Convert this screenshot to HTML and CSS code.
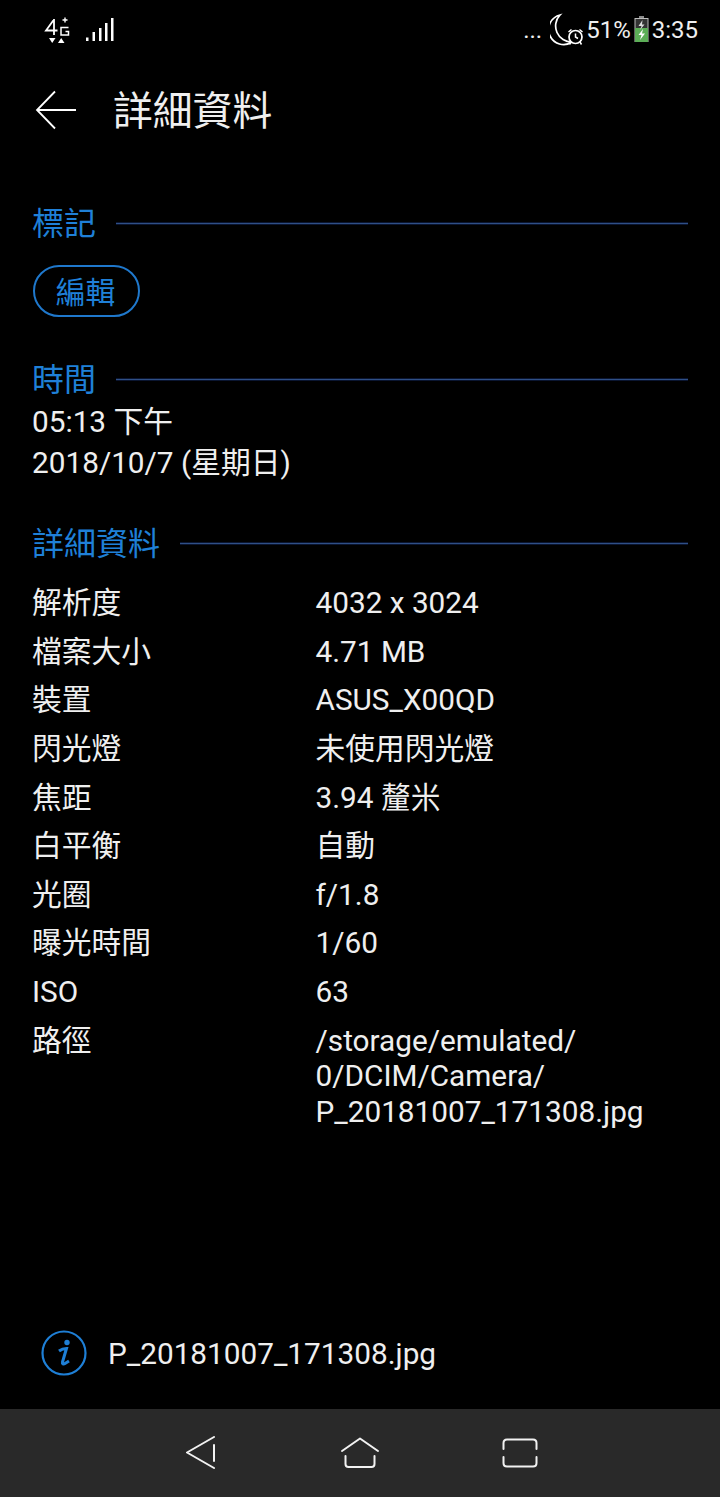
FILE: index.html
```html
<!DOCTYPE html>
<html lang="zh-Hant">
<head>
  <meta charset="UTF-8">
  <meta name="viewport" content="width=device-width, initial-scale=1.0">
  <title>詳細資料</title>
  <link rel="stylesheet" href="styles.css">
</head>
<body>
  <div class="phone">
    <!-- Status bar -->
    <div class="status-bar">
      <div class="status-left">
        <svg class="icon-net" width="26" height="30" viewBox="0 0 26 30">
          <path d="M10 4.500 L2 15.500 H13.500 M10 4 V20" fill="none" stroke="#fff" stroke-width="1.800"/>
          <path d="M18.500 5 H23.500 M21 2.500 V7.500" fill="none" stroke="#fff" stroke-width="1.400"/>
          <path d="M24.500 12.500 H17 V20 H24.500 V16.500 H21.500" fill="none" stroke="#fff" stroke-width="1.500"/>
          <path d="M5 23 H11.500 L8.200 28 Z M14 28 H20.500 L17.200 23 Z" fill="#fff"/>
        </svg>
        <svg class="icon-signal" width="29" height="26" viewBox="0 0 29 26">
          <path d="M1 20.500 H3.500 V24 H1 Z M7.500 15 H10 V24 H7.500 Z M14 11 H16.500 V24 H14 Z M20 6 H22.500 V24 H20 Z M26 1 H28.500 V24 H26 Z" fill="#fff"/>
        </svg>
      </div>
      <div class="status-right">
        <span class="dots">...</span>
        <svg class="icon-moon" width="36" height="34" viewBox="0 0 36 34">
          <path d="M10 2 A15 15 0 1 0 22 29 A16 16 0 0 1 10 2 Z" fill="none" stroke="#fff" stroke-width="1.700"/>
          <circle cx="25.500" cy="24" r="6.500" fill="#000" stroke="#fff" stroke-width="1.700"/>
          <path d="M25.500 20.500 V24 L28 25.500 M18.500 19 L21.500 16.500 M32.500 19 L29.500 16.500 M21 29 L19.500 31.500 M30 29 L31.500 31.500" fill="none" stroke="#fff" stroke-width="1.500"/>
        </svg>
        <span class="pct">51%</span>
        <svg class="icon-batt" width="15" height="28" viewBox="0 0 15 28">
          <rect x="5" y="0" width="5" height="2.500" fill="#8a8a8a"/>
          <rect x="1" y="2.500" width="13" height="23" fill="#333" stroke="#bbb"/>
          <rect x="1" y="12" width="13" height="14" fill="#5cae57"/>
          <path d="M8.500 4 L4.500 10 H7.500 L6 14 L10.500 8.500 H8 Z" fill="#ddd"/>
          <path d="M9 13 L4.500 19 H7.500 L6 24 L11 17.500 H8 Z" fill="#fff"/>
        </svg>
        <span class="clock">3:35</span>
      </div>
    </div>

    <!-- Title bar -->
    <header class="title-bar">
      <svg class="back-arrow" width="42" height="40" viewBox="0 0 42 40">
        <path d="M41 20 H2 M20 1.500 L2 20 L20 38.500" fill="none" stroke="#fff" stroke-width="1.800"/>
      </svg>
      <h1>詳細資料</h1>
    </header>

    <main class="content">
      <section class="group group-tags">
        <div class="group-head"><h2>標記</h2><span class="rule"></span></div>
        <button class="edit-btn">編輯</button>
      </section>

      <section class="group group-time">
        <div class="group-head"><h2>時間</h2><span class="rule"></span></div>
        <p class="time-line">05:13 下午</p>
        <p class="time-line">2018/10/7 (星期日)</p>
      </section>

      <section class="group group-details">
        <div class="group-head"><h2>詳細資料</h2><span class="rule"></span></div>
        <div class="detail-list">
          <div class="row"><span>解析度</span><span>4032 x 3024</span></div>
          <div class="row"><span>檔案大小</span><span>4.71 MB</span></div>
          <div class="row"><span>裝置</span><span>ASUS_X00QD</span></div>
          <div class="row"><span>閃光燈</span><span>未使用閃光燈</span></div>
          <div class="row"><span>焦距</span><span>3.94 釐米</span></div>
          <div class="row"><span>白平衡</span><span>自動</span></div>
          <div class="row"><span>光圈</span><span>f/1.8</span></div>
          <div class="row"><span>曝光時間</span><span>1/60</span></div>
          <div class="row"><span>ISO</span><span>63</span></div>
          <div class="row"><span>路徑</span><span class="path">/storage/emulated/<br>0/DCIM/Camera/<br>P_20181007_171308.jpg</span></div>
        </div>
      </section>
    </main>

    <!-- File name -->
    <div class="file-bar">
      <svg class="icon-info" width="46" height="46" viewBox="0 0 46 46">
        <circle cx="23" cy="23" r="21.500" fill="none" stroke="#1e7fd6" stroke-width="2.200"/>
        <circle cx="26" cy="12.500" r="2.700" fill="#1e7fd6"/>
        <path d="M18 21 C20 19.500 23 18.500 25.500 18.500 L21.500 32 C21 34 22.500 34.500 24 33.500 L28 31" fill="none" stroke="#1e7fd6" stroke-width="3"/>
      </svg>
      <span>P_20181007_171308.jpg</span>
    </div>

    <!-- Nav bar -->
    <nav class="nav-bar">
      <svg width="32" height="34" viewBox="0 0 32 34">
        <path d="M29 1 L2 16.500 L29 32 M29 9 V25" fill="none" stroke="#f2f2f2" stroke-width="2" stroke-linecap="round" stroke-linejoin="round"/>
      </svg>
      <svg width="40" height="32" viewBox="0 0 40 32">
        <path d="M2 14 L20 1.500 L38 14 M5.500 19 V27 Q5.500 30 8.500 30 H31.500 Q34.500 30 34.500 27 V19" fill="none" stroke="#f2f2f2" stroke-width="2" stroke-linecap="round" stroke-linejoin="round"/>
      </svg>
      <svg width="36" height="30" viewBox="0 0 36 30">
        <path d="M1.500 11 V5 Q1.500 1.500 5 1.500 H31 Q34.500 1.500 34.500 5 V11 M1.500 19 V25 Q1.500 28.500 5 28.500 H31 Q34.500 28.500 34.500 25 V19" fill="none" stroke="#f2f2f2" stroke-width="2" stroke-linecap="round"/>
      </svg>
    </nav>
  </div>
</body>
</html>
```

FILE: styles.css
```css
/* Global Styles */
html, body {
  margin: 0;
  padding: 0;
  background-color: #000;
}
body {
  font-family: 'Roboto', 'Noto Sans CJK TC', sans-serif;
  color: #efefef;
  font-size: 29.750px;
}
h1, h2, p {
  margin: 0;
  font-weight: 400;
}
svg {
  display: block;
  flex: none;
}
.phone {
  width: 720px;
  height: 1497px;
  display: flex;
  flex-direction: column;
  overflow: hidden;
}

/* Status bar */
.status-bar {
  height: 60px;
  display: flex;
  justify-content: space-between;
  align-items: center;
  padding: 0 22px 0 44px;
  box-sizing: border-box;
  font-size: 24px;
}
.status-left {
  display: flex;
  align-items: center;
  gap: 15px;
}
.status-right {
  display: flex;
  align-items: center;
}
.dots {
  margin-right: 8px;
}
.icon-batt {
  margin: 0 3px;
}

/* Title bar */
.title-bar {
  height: 100px;
  display: flex;
  align-items: center;
  padding-left: 35px;
  gap: 36px;
}
.title-bar h1 {
  font-size: 39.800px;
  line-height: 52px;
  margin-top: 4px;
}

/* Sections */
.content {
  flex: 1;
  padding: 40px 32px 0;
}
.group-head {
  display: flex;
  align-items: center;
  gap: 20px;
  height: 46px;
}
.group-head h2 {
  font-size: 32px;
  line-height: 46px;
  margin-top: 2px;
  color: #1f80d8;
}
.rule {
  flex: 1;
  height: 1px;
  background-color: #2f4f86;
  box-shadow: 0 1px 0 #0a1530, 0 -1px 0 #0a1530;
}
.group-time {
  margin-top: 39px;
}
.group-details {
  margin-top: 37px;
}
.edit-btn {
  display: block;
  width: 107px;
  height: 52px;
  margin: 19px 0 0 1px;
  padding: 0 2px 2px 0;
  background: none;
  border: 2px solid #1f78cc;
  border-radius: 26px;
  color: #1f80d8;
  font-family: inherit;
  font-size: 29.750px;
}
.time-line {
  line-height: 41px;
}
.time-line:first-of-type {
  margin-top: -1px;
}
.detail-list {
  margin-top: 19px;
}
.row {
  display: grid;
  grid-template-columns: 283.500px 1fr;
  line-height: 35.500px;
  padding-bottom: 13.150px;
}

/* File name */
.file-bar {
  height: 100px;
  display: flex;
  align-items: center;
  gap: 21px;
  padding: 0 0 12px 41px;
  box-sizing: border-box;
}

/* Nav bar */
.nav-bar {
  height: 88px;
  background-color: #292929;
  display: flex;
  justify-content: space-between;
  align-items: center;
  padding: 0 182px 0 185px;
}
```
